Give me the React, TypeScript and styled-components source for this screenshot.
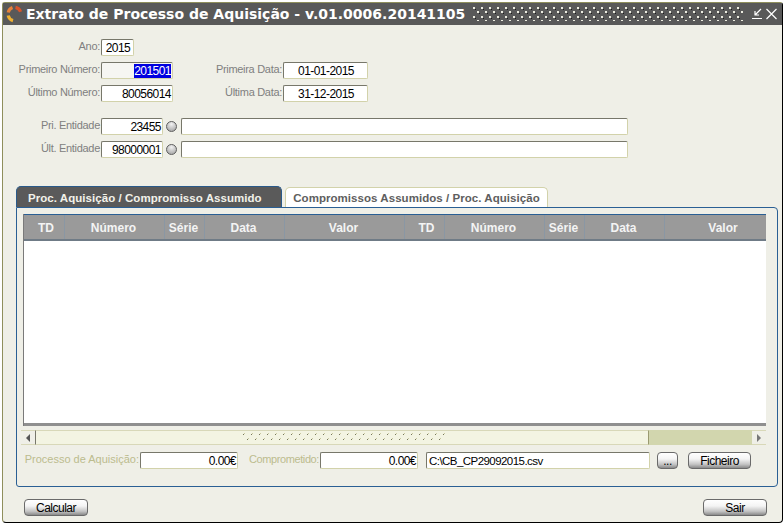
import React from "react";
import styled, { createGlobalStyle } from "styled-components";

const Global = createGlobalStyle`
  html, body { margin: 0; padding: 0; background: #ffffff; }
  body { width: 784px; height: 525px; overflow: hidden; font-family: "Liberation Sans", Arial, sans-serif; font-size: 12px; }
`;

const Page = styled.div`
  width: 784px;
  height: 525px;
  padding: 2px 1px 2px 2px;
  box-sizing: border-box;
`;

const Win = styled.div`
  height: 100%;
  box-sizing: border-box;
  display: flex;
  flex-direction: column;
  background: #efefe7;
  border: 1px solid #8f8f5c;
  border-right: 1px solid #000;
  border-bottom: 1px solid #000;
  border-radius: 3px 3px 4px 4px;
`;

const TitleBar = styled.div`
  height: 22px;
  flex: none;
  display: flex;
  align-items: center;
  background: #595959;
  padding: 0 4px 0 3px;
`;

const Logo = styled.svg`
  width: 17px;
  height: 18px;
  flex: none;
`;

const Title = styled.div`
  margin-left: 3px;
  color: #fff;
  font-family: "DejaVu Sans", Verdana, sans-serif;
  font-weight: 700;
  font-size: 14px;
  white-space: nowrap;
`;

const Grip = styled.svg`
  flex: none;
  width: 270px;
  height: 14px;
  margin: 0 auto 0 8px;
`;

const WinIcon = styled.svg`
  width: 14px;
  height: 14px;
  flex: none;
  margin-left: 1px;
`;

const Form = styled.div`
  flex: none;
  height: 161px;
  box-sizing: border-box;
  padding-top: 14px;
  padding-left: 14px;
  display: flex;
  flex-direction: column;
`;

const Row = styled.div<{ $top: number }>`
  display: flex;
  align-items: center;
  height: 17px;
  margin-top: ${(p) => p.$top}px;
`;

const Label = styled.div<{ $w: number; $gold?: boolean; $ls?: number }>`
  width: ${(p) => p.$w}px;
  flex: none;
  text-align: right;
  white-space: nowrap;
  color: ${(p) => (p.$gold ? "#bcbc8e" : "#808080")};
  font-size: 11px;
  letter-spacing: ${(p) => p.$ls ?? (p.$gold ? 0 : -0.3)}px;
  padding-right: 1px;
  padding-bottom: 3px;
  box-sizing: border-box;
`;

const Field = styled.div<{ $w: number; $align?: string; $ml?: number; $tint?: boolean; $path?: boolean }>`
  width: ${(p) => p.$w}px;
  flex: none;
  height: 17px;
  box-sizing: border-box;
  margin-left: ${(p) => p.$ml ?? 0}px;
  background: ${(p) => (p.$tint ? "#f6f6f2" : "#fff")};
  border: 1px solid #d2d2aa;
  border-top: 1px solid #77776a;
  border-left: 1px solid #77776a;
  border-radius: 2px;
  color: #000;
  font-size: ${(p) => (p.$path ? 11.5 : 12)}px;
  letter-spacing: -0.55px;
  line-height: 17px;
  padding: 0 1px 0 2px;
  text-align: ${(p) => p.$align ?? "right"};
  white-space: nowrap;
  overflow: hidden;
`;

const Selected = styled.span`
  background: #0000e0;
  color: #fff;
  display: inline-block;
  line-height: 15px;
`;

const Radio = styled.span`
  width: 11px;
  height: 11px;
  flex: none;
  margin: 0 4px 0 3px;
  border-radius: 50%;
  border: 1px solid #5e5e5e;
  box-sizing: border-box;
  background: radial-gradient(circle at 50% 25%, #f2f2f2, #adadad 80%);
`;

const Tabs = styled.div`
  flex: none;
  margin-left: 13px;
  height: 21px;
  display: flex;
  align-items: flex-end;
  gap: 3px;
`;

const Tab = styled.div<{ $active?: boolean }>`
  box-sizing: border-box;
  height: ${(p) => (p.$active ? 21 : 20)}px;
  width: ${(p) => (p.$active ? 266 : 263)}px;
  border-radius: 5px 5px 0 0;
  font-weight: 700;
  font-size: 11.5px;
  line-height: ${(p) => (p.$active ? 22 : 21)}px;
  text-align: ${(p) => (p.$active ? "left" : "center")};
  padding-left: ${(p) => (p.$active ? 11 : 0)}px;
  letter-spacing: 0.05px;
  white-space: nowrap;
  color: ${(p) => (p.$active ? "#f2f2ea" : "#5e5e5e")};
  background: ${(p) => (p.$active ? "#5a5a5a" : "#fff")};
  border: 1px solid ${(p) => (p.$active ? "#2a5a8a" : "#d2d2aa")};
  border-bottom: none;
`;

const Panel = styled.div`
  flex: none;
  margin-left: 13px;
  width: 762px;
  height: 280px;
  box-sizing: border-box;
  border: 1px solid #2a5f94;
  border-radius: 0 4px 4px 3px;
  padding: 6px 11px 0 6px;
  display: flex;
  flex-direction: column;
`;

const Grid = styled.div`
  height: 212px;
  flex: none;
  display: flex;
  flex-direction: column;
  background: #fff;
  border-left: 1px solid #7a7a7a;
`;

const HeaderRow = styled.div`
  height: 27px;
  flex: none;
  display: flex;
  background: #9a9a9a;
  border-top: 1px solid #2a5f94;
  border-bottom: 2px solid #6f7b86;
  box-sizing: border-box;
`;

const HeadCell = styled.div<{ $w: number; $shift: number }>`
  flex: none;
  width: ${(p) => p.$w}px;
  box-sizing: border-box;
  border-right: 1px solid #8a97a4;
  color: #f4f4f4;
  font-weight: 700;
  font-size: 12px;
  line-height: 26px;
  text-align: center;
  padding-left: ${(p) => Math.max(p.$shift, 0) * 2}px;
  padding-right: ${(p) => Math.max(-p.$shift, 0) * 2}px;
  &:last-child { border-right: none; }
`;

const GridBody = styled.div`
  flex: 1;
  background: #fff;
`;

const GridFoot = styled.div`
  height: 3px;
  flex: none;
  background: #8f8f8f;
`;

const ScrollBar = styled.div`
  height: 15px;
  flex: none;
  margin: 4px 0 0 -2px;
  display: flex;
  align-items: stretch;
  background: #d2d6ae;
  border-radius: 5px;
`;

const ScrollBtn = styled.div`
  width: 14px;
  flex: none;
  display: flex;
  align-items: center;
  justify-content: center;
  background: #efefe7;
  box-sizing: border-box;
  border-top: 1px solid #d8d8b8;
  border-bottom: 1px solid #d8d8b8;
`;

const Arrow = styled.svg`
  width: 6px;
  height: 8px;
`;

const Thumb = styled.div`
  width: 614px;
  flex: none;
  box-sizing: border-box;
  background: #f3f4e2;
  border-left: 1px solid #77776a;
  border-right: 1px solid #9a9a70;
  border-top: 1px solid #d8d8b8;
  border-bottom: 1px solid #d8d8b8;
  display: flex;
  justify-content: center;
  align-items: center;
`;

const ThumbGrip = styled.svg`
  width: 204px;
  height: 11px;
  margin-left: 5px;
`;

const Track = styled.div`
  flex: 1;
`;

const Foot = styled.div`
  display: flex;
  align-items: center;
  height: 17px;
  margin-top: 7px;
`;

const Button = styled.div<{ $w: number; $ml?: number }>`
  width: ${(p) => p.$w}px;
  height: 17px;
  flex: none;
  box-sizing: border-box;
  margin-left: ${(p) => p.$ml ?? 0}px;
  border: 1px solid #6a6a6a;
  border-radius: 4px;
  background: linear-gradient(#ffffff 0%, #f4f4f4 40%, #c4c4c4 75%, #8a8a8a 100%);
  color: #000;
  font-size: 12px;
  letter-spacing: -0.5px;
  line-height: 16px;
  text-align: center;
`;

const Bottom = styled.div`
  flex: 1;
  display: flex;
  justify-content: space-between;
  align-items: flex-start;
  padding: 12px 15px 0 21px;
`;

const cols = [41, 100, 40, 80, 120, 40, 100, 40, 80, 102];
const shifts = [2, -1, -1, -1, -1, 2, -1, -1, -1, 7];
const names = ["TD", "Número", "Série", "Data", "Valor", "TD", "Número", "Série", "Data", "Valor"];

export default function App() {
  return (
    <Page>
      <Global />
      <Win>
        <TitleBar>
          <Logo viewBox="0 0 17 18">
            <path d="M2.2 7.5 A6.8 6.8 0 0 1 6.5 2.6" stroke="#e8823a" strokeWidth="3.2" fill="none" />
            <path d="M9.5 2.4 A6.8 6.8 0 0 1 14.6 6.8" stroke="#d9552a" strokeWidth="3.2" fill="none" />
            <path d="M2.2 10.5 A6.8 6.8 0 0 0 7 15.6" stroke="#f0b030" strokeWidth="3.2" fill="none" />
          </Logo>
          <Title>Extrato de Processo de Aquisição - v.01.0006.20141105</Title>
          <Grip viewBox="0 0 270 14">
            <defs>
              <pattern id="titleDots" width="8" height="9" patternUnits="userSpaceOnUse">
                <rect x="0" y="0" width="2" height="2" fill="#ecece0" />
                <rect x="2" y="2" width="1" height="1" fill="#1e1e1e" />
                <rect x="4" y="4" width="2" height="2" fill="#ecece0" />
                <rect x="6" y="6" width="1" height="1" fill="#1e1e1e" />
              </pattern>
            </defs>
            <rect width="270" height="14" fill="url(#titleDots)" />
          </Grip>
          <WinIcon viewBox="0 0 14 14">
            <path d="M12 2 L6 8 M6 4 L6 8 L10 8 M3 11.5 H13" stroke="#fff" strokeWidth="1.2" fill="none" />
          </WinIcon>
          <WinIcon viewBox="0 0 14 14">
            <path d="M2.5 2 L12.5 12 M12.5 2 L2.5 12" stroke="#fff" strokeWidth="1.2" fill="none" />
          </WinIcon>
        </TitleBar>
        <Form>
          <Row $top={0}>
            <Label $w={84}>Ano:</Label>
            <Field $w={33} $align="center">2015</Field>
          </Row>
          <Row $top={6}>
            <Label $w={84}>Primeiro Número:</Label>
            <Field $w={72} $tint><Selected>201501</Selected></Field>
            <Label $w={110}>Primeira Data:</Label>
            <Field $w={85} $align="center">01-01-2015</Field>
          </Row>
          <Row $top={6}>
            <Label $w={84}>Último Número:</Label>
            <Field $w={72}>80056014</Field>
            <Label $w={110}>Última Data:</Label>
            <Field $w={85} $align="center">31-12-2015</Field>
          </Row>
          <Row $top={16}>
            <Label $w={84}>Pri. Entidade</Label>
            <Field $w={62}>23455</Field>
            <Radio />
            <Field $w={447} $align="left" />
          </Row>
          <Row $top={6}>
            <Label $w={84}>Últ. Entidade</Label>
            <Field $w={62}>98000001</Field>
            <Radio />
            <Field $w={447} $align="left" />
          </Row>
        </Form>
        <Tabs>
          <Tab $active>Proc. Aquisição / Compromisso Assumido</Tab>
          <Tab>Compromissos Assumidos / Proc. Aquisição</Tab>
        </Tabs>
        <Panel>
          <Grid>
            <HeaderRow>
              {names.map((n, i) => (
                <HeadCell key={i} $w={cols[i]} $shift={shifts[i]}>{n}</HeadCell>
              ))}
            </HeaderRow>
            <GridBody />
            <GridFoot />
          </Grid>
          <ScrollBar>
            <ScrollBtn>
              <Arrow viewBox="0 0 6 8"><path d="M5 0 L1 4 L5 8 Z" fill="#555" /></Arrow>
            </ScrollBtn>
            <Thumb>
              <ThumbGrip viewBox="0 0 204 11">
                <defs>
                  <pattern id="thumbDots" width="8" height="5" patternUnits="userSpaceOnUse" patternTransform="translate(0 1)">
                    <rect x="1" y="0" width="1" height="1" fill="#c9c9a0" />
                    <rect x="0" y="1" width="1" height="1" fill="#77775a" />
                  </pattern>
                  <pattern id="thumbDots2" width="8" height="5" patternUnits="userSpaceOnUse" patternTransform="translate(4 6)">
                    <rect x="1" y="0" width="1" height="1" fill="#c9c9a0" />
                    <rect x="0" y="1" width="1" height="1" fill="#77775a" />
                  </pattern>
                </defs>
                <rect y="1" width="204" height="2" fill="url(#thumbDots)" />
                <rect y="6" width="204" height="2" fill="url(#thumbDots2)" />
              </ThumbGrip>
            </Thumb>
            <Track />
            <ScrollBtn>
              <Arrow viewBox="0 0 6 8"><path d="M1 0 L5 4 L1 8 Z" fill="#777" /></Arrow>
            </ScrollBtn>
          </ScrollBar>
          <Foot>
            <Label $w={117} $gold>Processo de Aquisição:</Label>
            <Field $w={98}>0.00€</Field>
            <Label $w={82} $gold $ls={-0.4}>Comprometido:</Label>
            <Field $w={98}>0.00€</Field>
            <Field $w={224} $align="left" $ml={8} $path>C:\CB_CP29092015.csv</Field>
            <Button $w={21} $ml={7}>...</Button>
            <Button $w={63} $ml={10}>Ficheiro</Button>
          </Foot>
        </Panel>
        <Bottom>
          <Button $w={64}>Calcular</Button>
          <Button $w={64}>Sair</Button>
        </Bottom>
      </Win>
    </Page>
  );
}
